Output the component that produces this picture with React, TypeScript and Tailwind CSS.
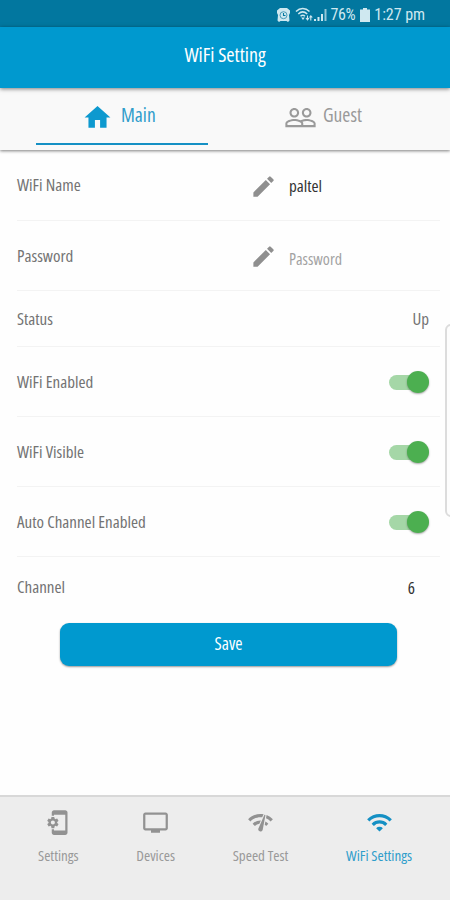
import type { IconType } from 'react-icons';
import {
    MdEdit,
    MdHome,
    MdNetworkCheck,
    MdPeopleOutline,
    MdPhonelinkSetup,
    MdTv,
    MdWifi,
} from 'react-icons/md';

const StatusBar = () => (
    <div className="h-[27px] bg-[#02779f] flex items-center justify-end pr-[25px] pt-[2px] text-[#cfe8f0] font-['Roboto'] font-normal font-stretch-semi-condensed text-[16px]">
        <svg className="w-[13px] h-[14px] mr-[5px]" viewBox="0 0 13 14">
            <path d="M0 2.500L3 0H10L13 2.500V5L12 7L12.500 12.500L11 14L9.500 13H3.500L2 14L.5 12.500L1 7L0 5Z" fill="currentColor" />
            <circle cx="6.500" cy="7.200" r="3.500" fill="none" stroke="#4b9cba" strokeWidth="1" />
            <path d="M6.500 5V7.500H8.500" fill="none" stroke="#02779f" strokeWidth="1.100" />
        </svg>
        <svg className="w-[18px] h-[15px] mr-[1px]" viewBox="0 0 18 15" fill="none" stroke="currentColor" strokeWidth="1.5">
            <path d="M1 4.500C5 .6 10.500 .6 14.500 4.500M3.300 7C6 4.400 9.500 4.400 12.200 7M5.500 9.300C7 8 8.700 8 10 9.300" />
            <path d="M6.200 10.500L8 13L9.800 10.500Z" fill="currentColor" stroke="none" />
            <path d="M12.500 8.500V12.500M11 11L12.500 12.800L14 11M15.800 13.500V9M14.500 10.500L15.800 8.800L17.300 10.500" strokeWidth="1.100" />
        </svg>
        <svg className="w-[13px] h-[14px] mr-[4px]" viewBox="0 0 13 14" fill="currentColor">
            <path d="M0 11h2v2H0zM3.500 9h2v4h-2zM7 6h2v7H7z" />
            <path d="M10.500 1h2v12h-2z" opacity=".7" />
        </svg>
        <span className="tracking-[-0.4px] mr-[5px]">76%</span>
        <svg className="w-[10px] h-[14px] mr-[4px]" viewBox="0 0 10 14" fill="currentColor">
            <path d="M3 0h4v1.500h3V14H0V1.500h3z" />
        </svg>
        <span className="tracking-[-0.05px]">1:27 pm</span>
    </div>
);

const Tabs = () => (
    <div className="relative h-[62px] flex bg-[#f9f9f9] shadow-[0_1px_3px_rgba(0,0,0,0.5)] px-[36px] text-[19.5px]">
        <div className="w-[172px] h-[57px] border-b-2 border-[#1590c4] flex items-center pl-[46px] text-[#2f9dcb]">
            <MdHome className="w-[31px] h-[31px] text-[#0d99cf] mt-[3px]" />
            <span className="ml-[8px] mb-[2px]">Main</span>
        </div>
        <div className="h-[57px] flex items-center pl-[76px] pb-[2px] text-[#9a9a9a]">
            <MdPeopleOutline className="w-[33px] h-[33px] mt-[4px]" />
            <span className="ml-[6px] mb-[1px]">Guest</span>
        </div>
    </div>
);

type RowProps = {
    label: string;
    height: string;
    children: React.ReactNode;
};

const Row = ({ label, height, children }: RowProps) => (
    <div className={`ml-[17px] mr-[10px] flex items-center justify-between border-b border-[#f3f3f3] pr-[11px] ${height}`}>
        <span>{label}</span>
        {children}
    </div>
);

const Toggle = () => (
    <div className="w-[40px] h-[22px] mt-[1px] flex items-center justify-end">
        <div className="w-[29px] h-[15px] rounded-full bg-[#a5d7a7] -mr-[11px]" />
        <div className="relative w-[22px] h-[22px] rounded-full bg-[#4caf50] shadow-[0_1px_2px_rgba(0,0,0,0.35)]" />
    </div>
);

type NavItemProps = {
    icon: IconType;
    label: string;
    active?: boolean;
};

const NavItem = ({ icon: Icon, label, active }: NavItemProps) => (
    <div className={`flex flex-col items-center ${active ? 'text-[#2f9dcb]' : 'text-[#999]'}`}>
        <Icon className={`w-[27px] h-[27px] ${active ? 'text-[#1590c4]' : 'text-[#929292]'}`} />
        <span className="mt-[9px] text-[15px] leading-[20px] whitespace-nowrap">{label}</span>
    </div>
);

const App = () => {
    return (
        <div className="relative w-[450px] h-[900px] flex flex-col bg-[#fefefe] overflow-hidden font-['Open_Sans','Noto_Sans',sans-serif] font-[380] font-stretch-semi-condensed">
            <StatusBar />
            <header className="relative z-10 h-[61px] bg-[#0099cf] shadow-[0_1px_4px_rgba(0,0,0,0.5)] flex items-center justify-center pb-[5px] text-white text-[20px] font-medium">
                WiFi Setting
            </header>
            <Tabs />
            <main className="flex-1 text-[17px] text-[#737373]">
                <Row label="WiFi Name" height="h-[71px]">
                    <div className="w-[179px] flex items-center">
                        <MdEdit className="w-[27px] h-[27px] mt-[2px] text-[#8f8f8f]" />
                        <span className="ml-[12px] mt-[2px] text-[#333]">paltel</span>
                    </div>
                </Row>
                <Row label="Password" height="h-[70px]">
                    <div className="w-[179px] flex items-center">
                        <MdEdit className="w-[27px] h-[27px] mt-[2px] text-[#8f8f8f]" />
                        <span className="ml-[12px] mt-[7px] text-[16px] text-[#a2a2a2]">Password</span>
                    </div>
                </Row>
                <Row label="Status" height="h-[56px]">
                    <span>Up</span>
                </Row>
                <Row label="WiFi Enabled" height="h-[70px]">
                    <Toggle />
                </Row>
                <Row label="WiFi Visible" height="h-[70px]">
                    <Toggle />
                </Row>
                <Row label="Auto Channel Enabled" height="h-[70px]">
                    <Toggle />
                </Row>
                <div className="h-[59px] pl-[17px] pr-[35px] flex items-center justify-between">
                    <span>Channel</span>
                    <span className="mt-[2px] text-[#333]">6</span>
                </div>
                <button className="block w-[337px] h-[43px] mt-[7px] ml-[60px] pb-[2px] rounded-[9px] bg-[#0099cf] text-white text-[17.5px] font-medium shadow-[0_1px_2px_rgba(0,0,0,0.4)]">
                    Save
                </button>
            </main>
            <nav className="h-[105px] bg-[#ededed] border-t-2 border-[#d8d8d8] flex justify-between items-start pl-[38px] pr-[38px] pt-[12px]">
                <NavItem icon={MdPhonelinkSetup} label="Settings" />
                <NavItem icon={MdTv} label="Devices" />
                <NavItem icon={MdNetworkCheck} label="Speed Test" />
                <NavItem icon={MdWifi} label="WiFi Settings" active />
            </nav>
            {/* edge panel handle */}
            <div className="absolute left-[445px] top-[324px] w-[12px] h-[193px] rounded-[6px] border-2 border-[#dcdcdc] bg-[#fdfdfd]" />
        </div>
    );
};

export default App;
